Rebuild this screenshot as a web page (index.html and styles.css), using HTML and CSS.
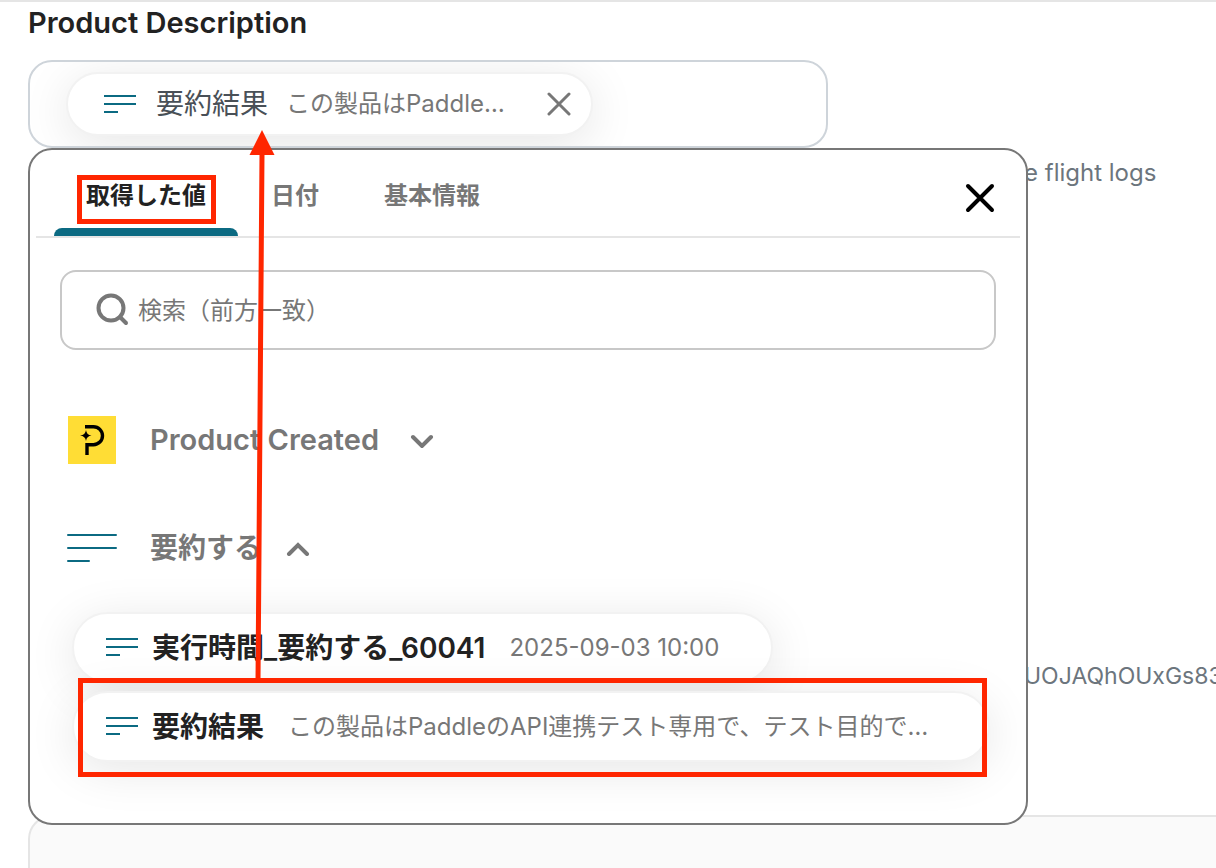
FILE: index.html
```html
<!DOCTYPE html>
<html lang="ja">
<head>
<meta charset="utf-8">
<meta name="viewport" content="width=device-width, initial-scale=1">
<title>Product Description</title>
<link rel="stylesheet" href="styles.css">
</head>
<body>
<svg class="defs" aria-hidden="true">
  <symbol id="lines" viewBox="0 0 32 20">
    <path d="M0 1h32M0 9h32M0 17h14" stroke="#0b6a82" stroke-width="2" fill="none"/>
  </symbol>
</svg>
<main class="page">
  <h1 class="title">Product Description</h1>
  <section class="field">
    <div class="chip chip-selected">
      <svg class="icon-lines"><use href="#lines"/></svg>
      <span class="chip-name">要約結果</span>
      <span class="chip-value">この製品はPaddle…</span>
      <button class="icon-button remove" type="button" aria-label="削除">
        <svg width="24" height="24" viewBox="0 0 24 24"><path d="M2 2l20 20M22 2L2 22"/></svg>
      </button>
    </div>
  </section>

  <div class="workspace">
    <section class="picker">
      <header class="picker-head">
        <nav class="tabs">
          <button class="tab active" type="button">取得した値</button>
          <button class="tab" type="button">日付</button>
          <button class="tab" type="button">基本情報</button>
        </nav>
        <button class="icon-button close" type="button" aria-label="閉じる">
          <svg width="32" height="32" viewBox="0 0 32 32"><path d="M4 4l24 24M28 4L4 28"/></svg>
        </button>
      </header>
      <label class="search">
        <svg width="34" height="34" viewBox="0 0 34 34"><circle cx="15" cy="15" r="12.500"/><path d="M24 24l6 6"/></svg>
        <input class="search-input" type="search" placeholder="検索（前方一致）" aria-label="検索">
      </label>
      <button class="group" type="button">
        <svg class="group-icon" viewBox="0 0 48 48">
          <path fill="#ffdd35" d="M0 0h48v48H0z"/>
          <path fill="none" stroke="#000" stroke-width="3.400" d="M17 10.700h8.500a9 9 0 0 1 0 18H19V39"/>
          <path d="M18 14q.6 5 5.500 5.500-4.900.5-5.500 5.500-.6-5-6-5.500 5.400-.5 6-5.500z"/>
        </svg>
        <span class="latin">Product Created</span>
        <svg class="chevron" viewBox="0 0 24 16"><path d="M3 5l9 9 9-9"/></svg>
      </button>
      <button class="group" type="button">
        <svg class="group-icon group-icon-lines" viewBox="0 0 50 30"><path d="M1 2h48M1 15h48M1 28h21"/></svg>
        <span>要約する</span>
        <svg class="chevron" viewBox="0 0 24 16"><path d="M3 14l9-9 9 9"/></svg>
      </button>
      <div class="chips">
        <button class="chip" type="button">
          <svg class="icon-lines"><use href="#lines"/></svg>
          <span class="chip-name">実行時間_要約する_60041</span>
          <span class="chip-value">2025-09-03 10:00</span>
        </button>
        <button class="chip chip-wide" type="button">
          <svg class="icon-lines"><use href="#lines"/></svg>
          <span class="chip-name">要約結果</span>
          <span class="chip-value">この製品はPaddleのAPI連携テスト専用で、テスト目的で…</span>
        </button>
      </div>
    </section>
    <aside class="hints">
      <p>e flight logs</p>
      <p class="code">UOJAQhOUxGs83</p>
    </aside>
  </div>
  <section class="next-card"></section>

  <svg class="annotations" width="1000" height="800" viewBox="0 0 1000 800" aria-hidden="true">
    <path class="mark" d="M79.500 175.500h134v44h-134zM80.500 678.500h904v94h-904zM262 152L258 680"/>
    <path class="mark-head" d="M262 128l12.500 25h-25z"/>
  </svg>
</main>
</body>
</html>
```
FILE: styles.css
```css
* { box-sizing: border-box; }

body {
  margin: 0;
  background: #fff;
  color: #222;
  font-family: Inter, "Noto Sans CJK JP", sans-serif;
  font-size: 24px;
  line-height: 36px;
}

button {
  margin: 0;
  border: 0;
  background: none;
  color: inherit;
  font: inherit;
  text-align: left;
  cursor: pointer;
}

svg { flex: none; }

.defs {
  position: absolute;
  width: 0;
  height: 0;
}

.page {
  position: relative;
  display: flex;
  flex-direction: column;
  min-height: 100vh;
  padding-left: 28px;
  border-top: 2px solid #e5e5e5;
  overflow: hidden;
}

.title {
  margin: 3px 0 19px;
  font-size: 29px;
  font-weight: 600;
}

.field {
  display: flex;
  max-width: 800px;
  padding: 10px 36px;
  border: 2px solid #ced4da;
  border-radius: 24px;
  overflow: hidden;
}

.chip {
  display: flex;
  align-items: center;
  gap: 14px;
  padding: 16px 52px 15px 32px;
  border: 2px solid #f2f2f2;
  border-radius: 36px;
  background: #fff;
  box-shadow: 0 8px 48px rgba(0, 0, 0, 0.1);
  white-space: nowrap;
}

.chip-name {
  font-size: 28px;
  font-weight: 600;
}

.chip-value {
  margin-left: 10px;
  color: #777;
}

.chip-selected {
  gap: 18px;
  padding: 12px 20px 12px 36px;
}

.chip-selected .icon-lines { margin-top: 2px; }

.chip-selected .chip-name {
  margin-left: 2px;
  color: #495057;
  font-weight: 400;
}

.chip-selected .chip-value { margin-left: 0; }

.chip-wide { padding-right: 60px; }

.icon-lines {
  width: 32px;
  height: 20px;
}

.icon-button {
  display: flex;
  padding: 0;
  fill: none;
  stroke-linecap: round;
}

.remove {
  margin-left: 24px;
  stroke: #777;
  stroke-width: 3;
}

.close {
  margin: 10px 24px 0 0;
  stroke: #000;
  stroke-width: 4;
}

.workspace {
  display: grid;
  grid-template-columns: minmax(0, 1000px) minmax(188px, 1fr);
}

.picker {
  position: relative;
  z-index: 1;
  padding: 0 6px 61px;
  border: 2px solid #777;
  border-radius: 24px;
  background: #fff;
}

.picker-head {
  display: flex;
  align-items: center;
  justify-content: space-between;
  padding-left: 18px;
  border-bottom: 2px solid #e5e5e5;
}

.tabs {
  display: flex;
  gap: 1px;
}

.tab {
  padding: 28px 32px 14px;
  border-bottom: 8px solid transparent;
  color: #777;
  font-weight: 600;
}

.tab.active {
  position: relative;
  color: #222;
}

.tab.active::after {
  content: "";
  position: absolute;
  inset: auto 0 -8px;
  height: 8px;
  border-radius: 8px 8px 0 0;
  background: #0b6a82;
}

.search {
  display: flex;
  align-items: center;
  gap: 8px;
  margin: 32px 24px 62px;
  padding: 20px 34px;
  border: 2px solid #c8c8c8;
  border-radius: 16px;
  fill: none;
  stroke: #777;
  stroke-width: 4;
  stroke-linecap: round;
}

.search-input {
  flex: 1;
  min-width: 0;
  height: 36px;
  padding: 2px 0 0;
  border: 0;
  outline: 0;
  background: none;
  color: #222;
  font: inherit;
}

.search-input::placeholder {
  color: #777;
  opacity: 1;
}

.group {
  display: flex;
  align-items: center;
  height: 56px;
  margin: 0 30px 52px;
  padding: 0 2px;
  color: #777;
  font-size: 28px;
  font-weight: 600;
}

.latin {
  margin-right: 7px;
  font-size: 29px;
}

.group-icon {
  width: 48px;
  height: 48px;
  margin-right: 34px;
}

.group-icon-lines {
  width: 50px;
  height: 30px;
  margin: 0 33px 0 -1px;
  fill: none;
  stroke: #0b6a82;
  stroke-width: 2;
  stroke-linecap: round;
}

.chevron {
  width: 24px;
  height: 16px;
  margin-left: 24px;
  fill: none;
  stroke: #777;
  stroke-width: 4;
  stroke-linecap: round;
}

.chips {
  display: flex;
  flex-direction: column;
  align-items: flex-start;
  gap: 8px;
  margin: -16px 36px 0;
}

.hints {
  display: flex;
  flex-direction: column;
  justify-content: space-between;
  margin-left: -4px;
  padding: 7px 0 131px;
  color: #6c757d;
  white-space: nowrap;
}

.hints p { margin: 0; }

.hints .code { font-size: 23px; }

.next-card {
  flex: 1;
  min-height: 53px;
  margin-top: -10px;
  border: solid #e5e5e5;
  border-width: 2px 0 0 2px;
  border-radius: 24px 0 0;
  background: #fafafa;
}

.annotations {
  position: absolute;
  z-index: 2;
  top: 0;
  left: 0;
  pointer-events: none;
}

.mark {
  fill: none;
  stroke: #ff2600;
  stroke-width: 5;
}

.mark-head { fill: #ff2600; }
```
